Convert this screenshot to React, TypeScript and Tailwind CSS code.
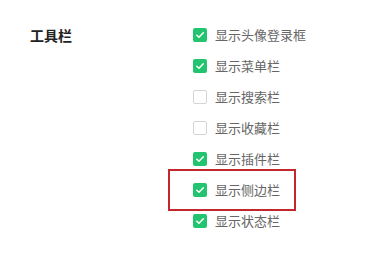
const options = [
  { label: '显示头像登录框', checked: true },
  { label: '显示菜单栏', checked: true },
  { label: '显示搜索栏', checked: false },
  { label: '显示收藏栏', checked: false },
  { label: '显示插件栏', checked: true },
  { label: '显示侧边栏', checked: true, marked: true },
  { label: '显示状态栏', checked: true },
]

const Checkbox = ({ checked }: { checked: boolean }) =>
  checked ? (
    <span className="flex h-[14px] w-[14px] items-center justify-center rounded-[2px] bg-[#23c46f]">
      <svg width="10" height="10" viewBox="0 0 10 10" fill="none">
        <path d="M1.8 5.2 L4 7.3 L8.3 2.8" stroke="#fff" strokeWidth="1.5" strokeLinecap="round" strokeLinejoin="round" />
      </svg>
    </span>
  ) : (
    <span className="block h-[14px] w-[14px] rounded-[2px] border border-[#d4d4d4] bg-white" />
  )

export default function App() {
  return (
    <div
      className="flex h-[253px] w-[367px] bg-white pl-[30px] pt-[19.5px]"
      style={{ fontFamily: '"Noto Sans CJK SC", "Noto Sans", sans-serif' }}
    >
      <div className="w-[163px] text-[14px] font-bold leading-[31px] text-[#222]">工具栏</div>
      <ul className="flex flex-col">
        {options.map((o) => (
          <li key={o.label} className="relative flex h-[31px] items-center gap-[8px]">
            <Checkbox checked={o.checked} />
            <span className="text-[13px] text-[#666]">{o.label}</span>
            {o.marked && (
              <span className="pointer-events-none absolute left-[-25px] top-[-5.5px] h-[42px] w-[128px] border-2 border-[#c1272d]" />
            )}
          </li>
        ))}
      </ul>
    </div>
  )
}
